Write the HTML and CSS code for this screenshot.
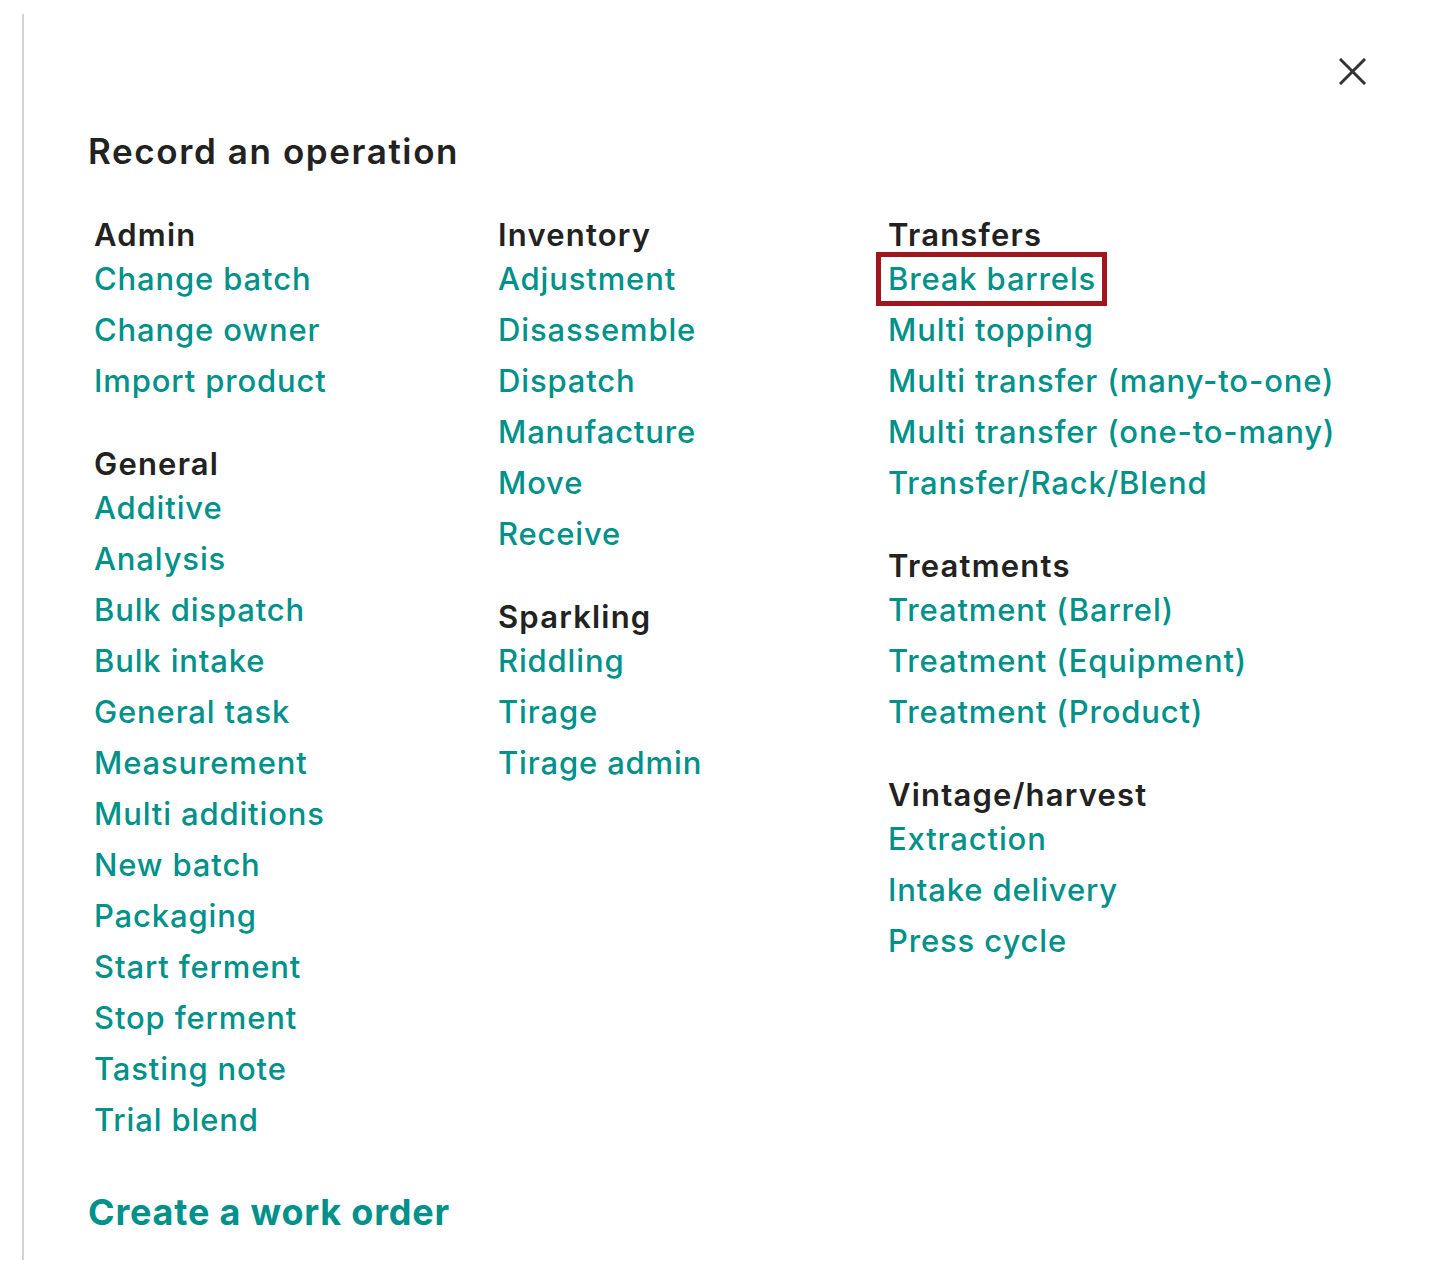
FILE: index.html
```html
<!DOCTYPE html>
<html lang="en">
<head>
<meta charset="utf-8">
<title>Record an operation</title>
<link rel="stylesheet" href="styles.css">
</head>
<body>
<aside class="panel">
  <div class="topbar">
    <button class="close" aria-label="Close">
      <svg width="27" height="27" viewBox="0 0 27 27"><path d="M2 2 L25 25 M25 2 L2 25" stroke="#333" stroke-width="3" stroke-linecap="square" fill="none"/></svg>
    </button>
  </div>
  <h1 class="title">Record an operation</h1>
  <div class="columns">
    <div class="col col-1">
      <section class="group">
        <h2>Admin</h2>
        <a href="#">Change batch</a>
        <a href="#">Change owner</a>
        <a href="#">Import product</a>
      </section>
      <section class="group">
        <h2>General</h2>
        <a href="#">Additive</a>
        <a href="#">Analysis</a>
        <a href="#">Bulk dispatch</a>
        <a href="#">Bulk intake</a>
        <a href="#">General task</a>
        <a href="#">Measurement</a>
        <a href="#">Multi additions</a>
        <a href="#">New batch</a>
        <a href="#">Packaging</a>
        <a href="#">Start ferment</a>
        <a href="#">Stop ferment</a>
        <a href="#">Tasting note</a>
        <a href="#">Trial blend</a>
      </section>
    </div>
    <div class="col col-2">
      <section class="group">
        <h2>Inventory</h2>
        <a href="#">Adjustment</a>
        <a href="#">Disassemble</a>
        <a href="#">Dispatch</a>
        <a href="#">Manufacture</a>
        <a href="#">Move</a>
        <a href="#">Receive</a>
      </section>
      <section class="group">
        <h2>Sparkling</h2>
        <a href="#">Riddling</a>
        <a href="#">Tirage</a>
        <a href="#">Tirage admin</a>
      </section>
    </div>
    <div class="col col-3">
      <section class="group">
        <h2>Transfers</h2>
        <a href="#" class="focused">Break barrels</a>
        <a href="#">Multi topping</a>
        <a href="#">Multi transfer (many-to-one)</a>
        <a href="#">Multi transfer (one-to-many)</a>
        <a href="#">Transfer/Rack/Blend</a>
      </section>
      <section class="group">
        <h2>Treatments</h2>
        <a href="#">Treatment (Barrel)</a>
        <a href="#">Treatment (Equipment)</a>
        <a href="#">Treatment (Product)</a>
      </section>
      <section class="group">
        <h2>Vintage/harvest</h2>
        <a href="#">Extraction</a>
        <a href="#">Intake delivery</a>
        <a href="#">Press cycle</a>
      </section>
    </div>
  </div>
  <a href="#" class="work-order">Create a work order</a>
</aside>
</body>
</html>
```
FILE: styles.css
```css
* { box-sizing: border-box; }
html, body { margin: 0; padding: 0; background: #fff; }
body {
  font-family: Inter, "Open Sans", "Liberation Sans", sans-serif;
  color: #222;
}
.panel {
  margin: 14px 0 0 22px;
  height: 1246px;
  width: 1433px;
  border-left: 2px solid #d4d4d4;
  padding: 0 0 0 64px;
}
.topbar {
  display: flex;
  justify-content: flex-end;
  padding: 44px 89px 0 0;
  height: 115px;
}
.close {
  border: 0;
  background: none;
  padding: 0;
  width: 27px;
  height: 27px;
  cursor: pointer;
}
.close svg { display: block; }
.title {
  margin: 0;
  font-size: 35px;
  line-height: 44px;
  font-weight: 600;
  color: #222;
  letter-spacing: 1.6px;
}
.columns {
  display: flex;
  margin-top: 40px;
  padding-left: 6px;
}
.col-1 { width: 404px; }
.col-2 { width: 390px; }
.col-3 { flex: 1; }
.group {
  display: flex;
  flex-direction: column;
  align-items: flex-start;
}
.group + .group { margin-top: 39px; }
.group h2 {
  margin: 0;
  font-size: 31px;
  line-height: 44px;
  font-weight: 600;
  color: #222;
  letter-spacing: 1.2px;
}
.group a {
  margin-top: 7px;
  font-size: 31px;
  line-height: 44px;
  font-weight: 500;
  color: #00918a;
  text-decoration: none;
  letter-spacing: 0.85px;
}
.group h2 + a { margin-top: 0; }
.group a.focused {
  margin-left: -7px;
  padding: 0 6px 0 7px;
  outline: 5px solid #a0161e;
  outline-offset: 0;
}
.work-order {
  display: inline-block;
  margin-top: 48px;
  font-size: 36px;
  line-height: 44px;
  font-weight: 700;
  color: #00918a;
  text-decoration: none;
  letter-spacing: 0.8px;
}
```
